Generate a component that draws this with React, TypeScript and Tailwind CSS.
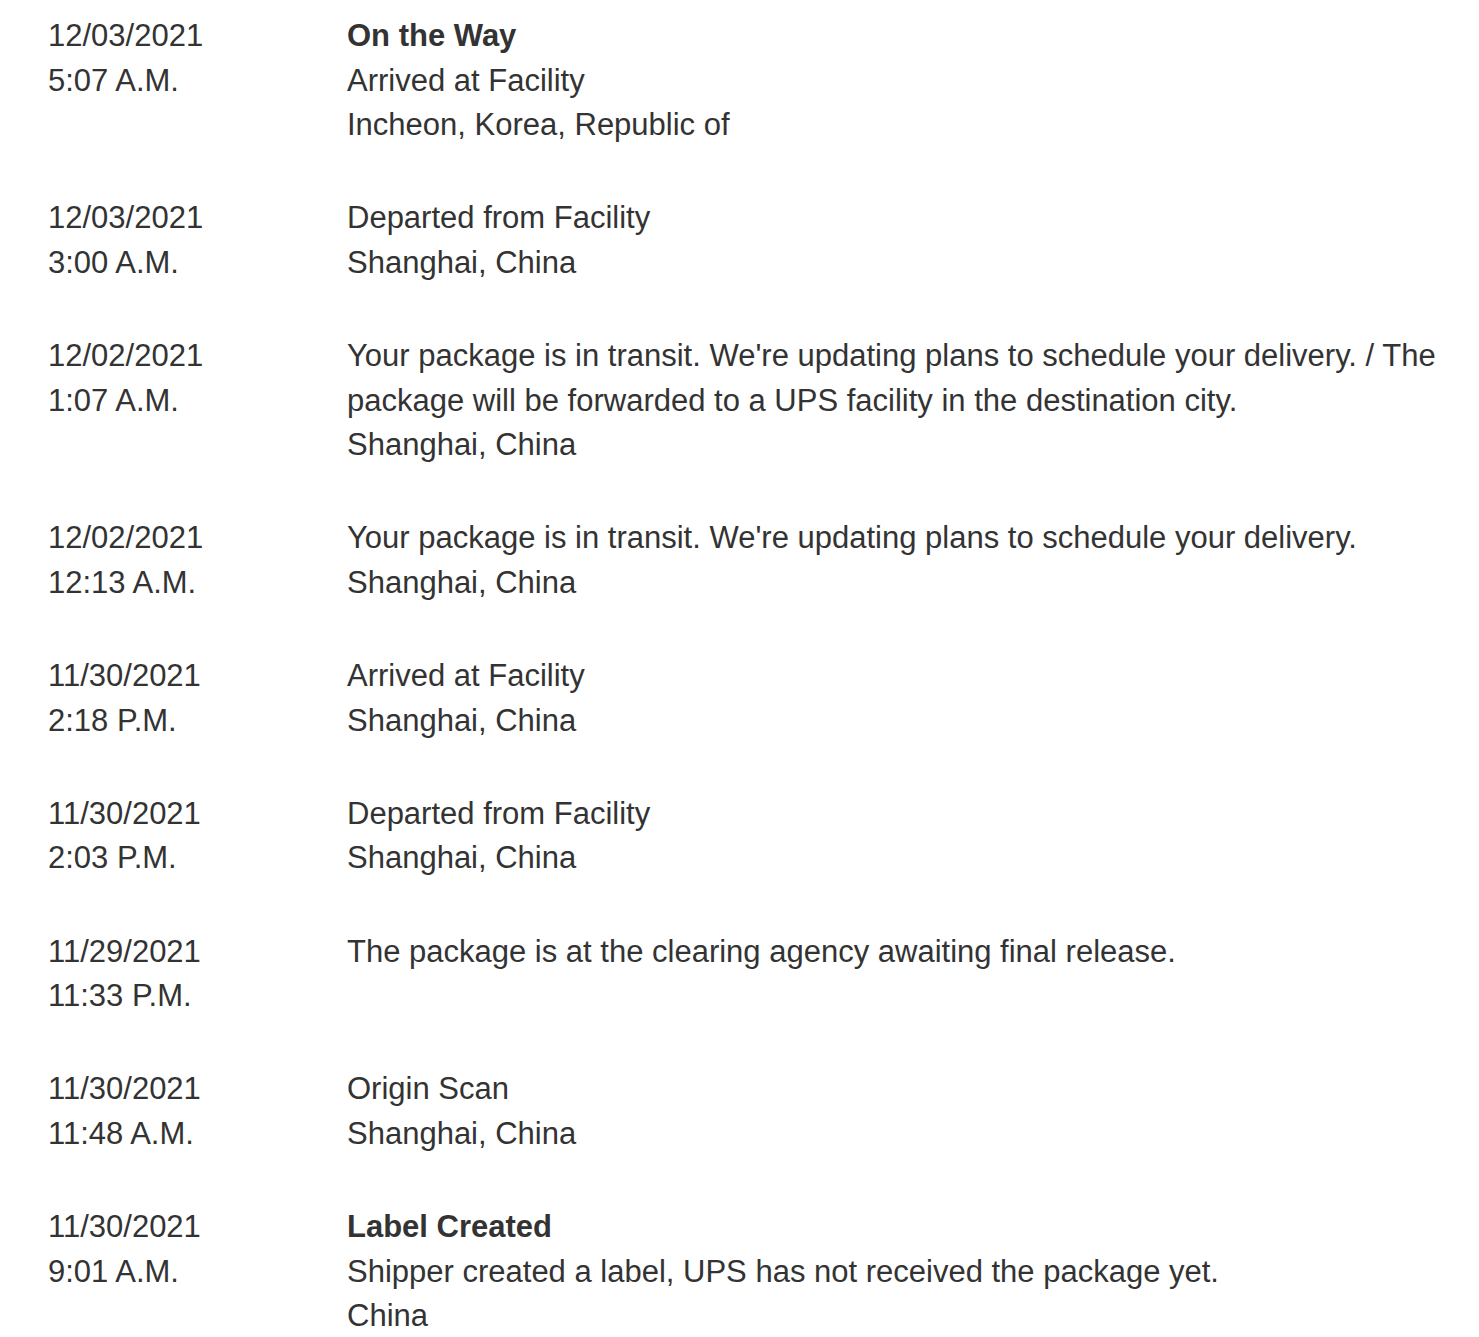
const events = [
  { date: "12/03/2021", time: "5:07 A.M.", title: "On the Way", lines: ["Arrived at Facility", "Incheon, Korea, Republic of"] },
  { date: "12/03/2021", time: "3:00 A.M.", lines: ["Departed from Facility", "Shanghai, China"] },
  {
    date: "12/02/2021",
    time: "1:07 A.M.",
    lines: [
      "Your package is in transit. We're updating plans to schedule your delivery. / The package will be forwarded to a UPS facility in the destination city.",
      "Shanghai, China",
    ],
  },
  { date: "12/02/2021", time: "12:13 A.M.", lines: ["Your package is in transit. We're updating plans to schedule your delivery.", "Shanghai, China"] },
  { date: "11/30/2021", time: "2:18 P.M.", lines: ["Arrived at Facility", "Shanghai, China"] },
  { date: "11/30/2021", time: "2:03 P.M.", lines: ["Departed from Facility", "Shanghai, China"] },
  { date: "11/29/2021", time: "11:33 P.M.", lines: ["The package is at the clearing agency awaiting final release."] },
  { date: "11/30/2021", time: "11:48 A.M.", lines: ["Origin Scan", "Shanghai, China"] },
  { date: "11/30/2021", time: "9:01 A.M.", title: "Label Created", lines: ["Shipper created a label, UPS has not received the package yet.", "China"] },
];

export default function App() {
  return (
    <div className="min-h-screen bg-white pt-[14px] pl-[48px] pr-[20px] font-['Liberation_Sans',Arial,sans-serif] text-[31px] leading-[44.5px] text-[#333333]">
      {events.map((ev, i) => (
        <div key={i} className="flex pb-[48.75px]">
          <div className="w-[299px] shrink-0">
            <div>{ev.date}</div>
            <div>{ev.time}</div>
          </div>
          <div className="flex-1">
            {ev.title && <div className="font-bold">{ev.title}</div>}
            {ev.lines.map((line, j) => (
              <div key={j}>{line}</div>
            ))}
          </div>
        </div>
      ))}
    </div>
  );
}
